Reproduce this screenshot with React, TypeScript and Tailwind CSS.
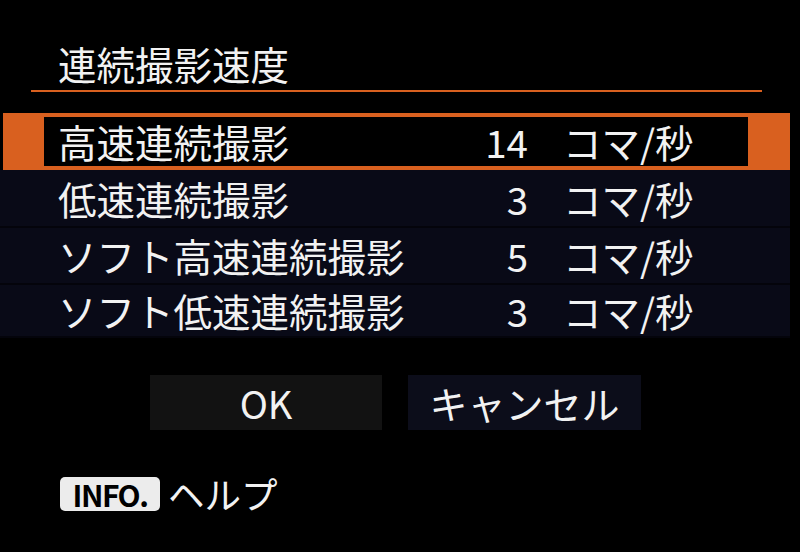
import React from "react";

interface Row {
  label: string;
  value: string;
  selected?: boolean;
  height: string;
}

const rows: Row[] = [
  { label: "高速連続撮影", value: "14", selected: true, height: "h-[57px]" },
  { label: "低速連続撮影", value: "3", height: "h-[58px]" },
  { label: "ソフト高速連続撮影", value: "5", height: "h-[57px]" },
  { label: "ソフト低速連続撮影", value: "3", height: "h-[53px]" },
];

const RateRow = ({ label, value, selected, height }: Row) => {
  return (
    <div
      className={
        selected
          ? `flex items-center ${height} ml-[3px] border-[#d9601f] border-t-4 border-b-4 border-l-[41px] border-r-[42px] bg-black pl-[14px]`
          : `flex items-center ${height} bg-[#090a17] border-b-2 border-[#04040b] pl-[58px]`
      }
    >
      <span className="w-[400px] whitespace-nowrap">{label}</span>
      <span className="w-[70px] text-right">{value}</span>
      <span className="ml-[35px] whitespace-nowrap">コマ/秒</span>
    </div>
  );
};

const App = () => {
  return (
    <div
      className="w-[800px] h-[552px] bg-black text-[#f2f2f2] font-normal flex flex-col overflow-hidden"
      style={{ fontFamily: '"Noto Sans CJK JP", "Noto Sans", sans-serif' }}
    >
      <div className="pt-[44px] pl-[58px] text-[38.5px] leading-none h-[82px]">
        連続撮影速度
      </div>

      <div className="mt-[8px] ml-[31px] w-[731px] h-[2px] bg-[#d9601f]" />

      <div className="mt-[21px] w-[790px] flex flex-col text-[38.5px] leading-none">
        {rows.map((row) => (
          <RateRow key={row.label} {...row} />
        ))}
      </div>

      <div className="mt-[37px] ml-[150px] flex gap-[26px] text-[38px] leading-none">
        <div className="w-[232px] h-[55px] bg-[#121212] flex items-center justify-center">
          OK
        </div>
        <div className="w-[233px] h-[55px] bg-[#0c0d1a] flex items-center justify-center">
          キャンセル
        </div>
      </div>

      <div className="mt-[46px] ml-[60px] flex items-center gap-[8px]">
        <span className="w-[100px] h-[34px] rounded-[5px] bg-[#ececec] text-black font-bold text-[30px] leading-none tracking-tighter flex items-center justify-center">
          INFO.
        </span>
        <span className="text-[36.5px] leading-none">ヘルプ</span>
      </div>
    </div>
  );
};

export default App;
